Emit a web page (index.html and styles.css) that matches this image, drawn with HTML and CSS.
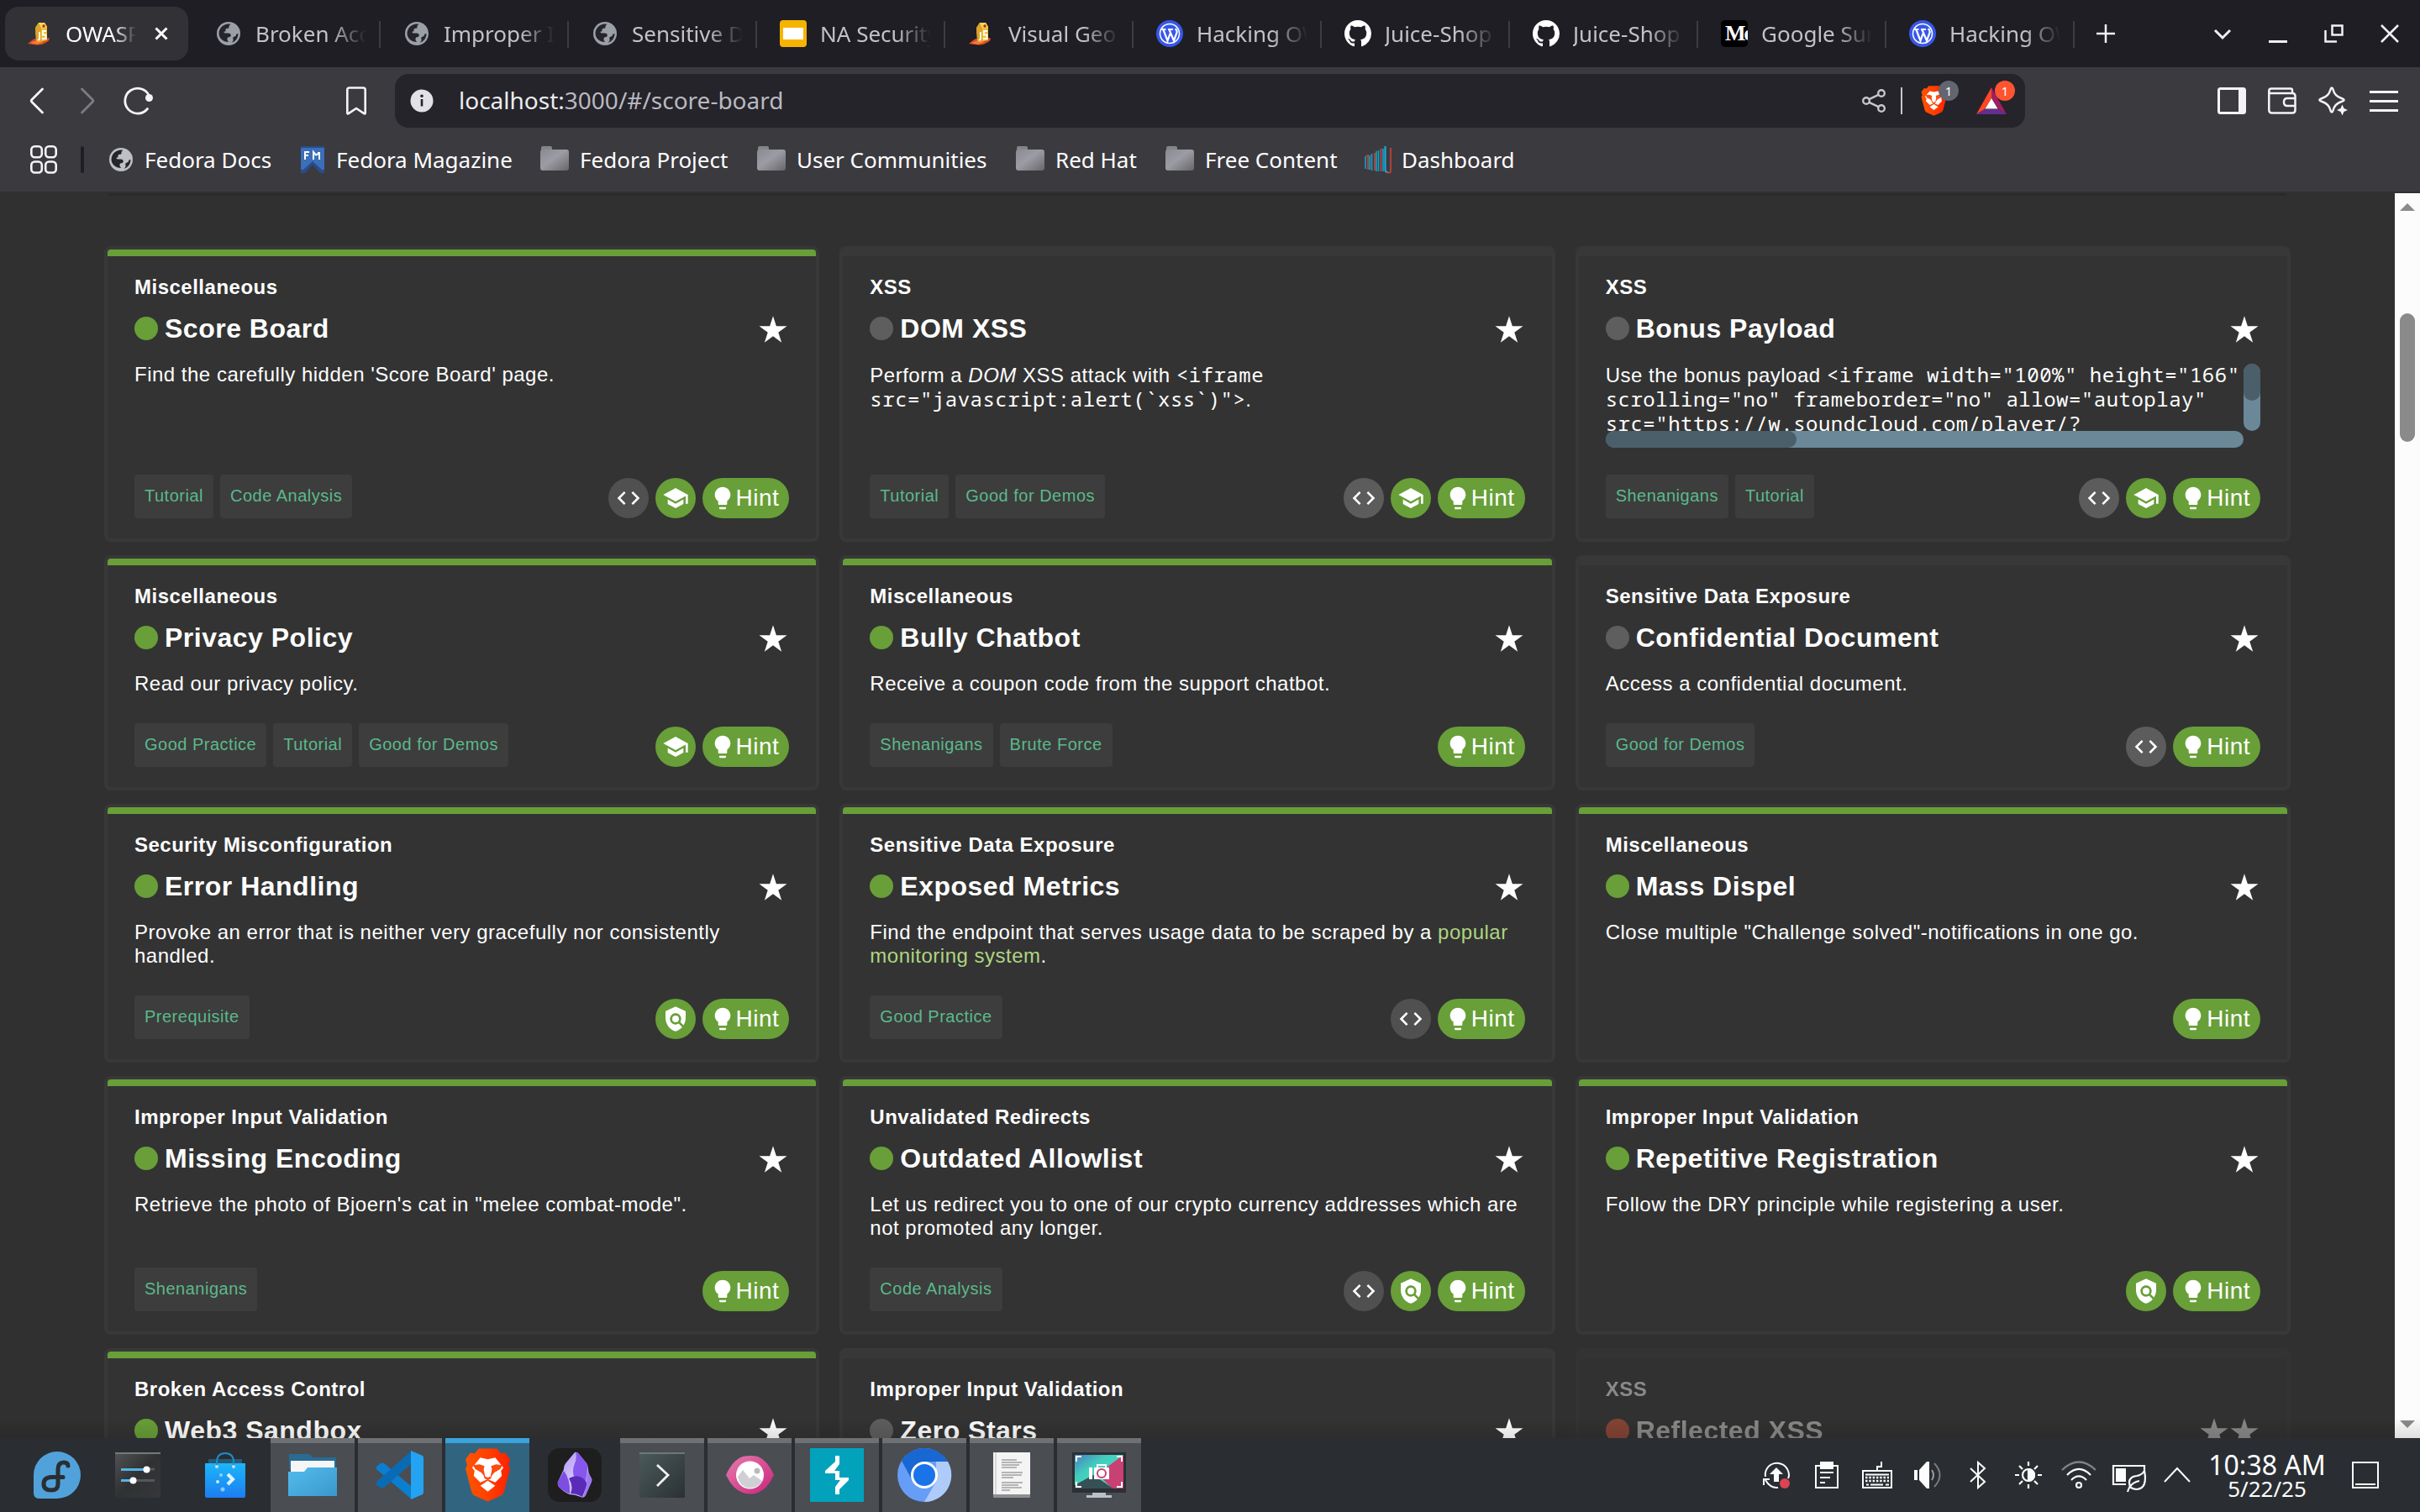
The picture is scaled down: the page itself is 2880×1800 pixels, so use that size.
FILE: index.html
```html
<!DOCTYPE html>
<html lang="en">
<head>
<meta charset="utf-8">
<title>OWASP Juice Shop</title>
<link rel="stylesheet" href="styles.css">
</head>
<body>
<svg class="defs" width="0" height="0">
<defs>
<linearGradient id="g-folder" x1="0" y1="0" x2="1" y2="1"><stop offset="0" stop-color="#8a8a92"/><stop offset=".45" stop-color="#9c9ca4"/><stop offset="1" stop-color="#67676a"/></linearGradient>
<linearGradient id="g-dark" x1="0" y1="0" x2="1" y2="1"><stop offset="0" stop-color="#525355"/><stop offset=".5" stop-color="#303133"/><stop offset="1" stop-color="#36373a"/></linearGradient>
<linearGradient id="g-term" x1="0" y1="0" x2="1" y2="1"><stop offset="0" stop-color="#4b5a5b"/><stop offset="1" stop-color="#2b3133"/></linearGradient>
<linearGradient id="g-bag" x1="0" y1="0" x2="0" y2="1"><stop offset="0" stop-color="#1cb6f9"/><stop offset="1" stop-color="#1c7df2"/></linearGradient>
<linearGradient id="g-dir" x1="0" y1="0" x2="1" y2="1"><stop offset="0" stop-color="#54bcef"/><stop offset="1" stop-color="#3a98cb"/></linearGradient>
<linearGradient id="g-pink" x1="0" y1="0" x2="1" y2="1"><stop offset="0" stop-color="#e77bb0"/><stop offset="1" stop-color="#c9247a"/></linearGradient>
<linearGradient id="g-brave" x1="0" y1="0" x2="1" y2="0"><stop offset="0" stop-color="#ff5500"/><stop offset=".5" stop-color="#ff4000"/><stop offset="1" stop-color="#ff2000"/></linearGradient>
<linearGradient id="g-scr" x1="0" y1="0" x2="1" y2="1"><stop offset="0" stop-color="#4a7fc0"/><stop offset=".35" stop-color="#42cdbd"/><stop offset="1" stop-color="#4ce6c8"/></linearGradient>
<linearGradient id="g-obs" x1="0" y1="0" x2="1" y2="1"><stop offset="0" stop-color="#a88bf5"/><stop offset=".5" stop-color="#d3c4fb"/><stop offset="1" stop-color="#b79df6"/></linearGradient>
</defs>
<symbol id="globe" viewBox="0 0 24 24"><circle cx="12" cy="12" r="10.5" fill="currentColor"/><path class="hole" d="M3.4 12c0-4.8 3.9-8.6 8.6-8.6.8 0 1.2.1 1.9.3-1.1.5-1.6 1.3-1.5 2.3.1.9-.4 1.4-1.5 1.4-1.200 0-1.600.6-1.500 1.700.1.800-.5 1.100-1.200 1.100-.5.100-.5 1 .2 1.300 2.100.4 5.200-.4 5.600 1.600.3 1.500-.5 2-1.800 2.100-1.200.1-1.500 1-1.300 2.300.1.800.700 1.500 1.300 2-5.200 0-8.800-3.400-8.800-7.500zM16 16.500c-.5-1 .3-1.600 1.400-1.900 1.300-.4 1.700-1.300 1.400-2.300 1 .2 1.400.1 1.800-.500.2 4-2.600 7.500-6 8.400 1.400-1 2-2.400 1.400-3.700z"/></symbol>
<symbol id="juice" viewBox="0 0 32 32"><path d="M1 28c3-2 5-5 9-6l16-1c2 1 0 4-2 5s-4 2-6 3c-5 1-11 0-17-1z" fill="#dc4b20"/><path d="M4 27l8-3 8 2-8 3z" fill="#f47a3a"/><path d="M10 9l4-6h7l3 5v16l-11 2-2-2z" fill="#f2c038"/><path d="M10 9l4-6 3 6v16l-6-1z" fill="#dca42c"/><path d="M14 3h7l3 5-7 1z" fill="#f8d95c"/><circle cx="20" cy="7" r="1.700" fill="#b4291e"/><path d="M15 14v8q0 2-2 1M23 13h-4v4.500h3.500V22H18" fill="none" stroke="#fff" stroke-width="1.800"/></symbol>
<symbol id="slides" viewBox="0 0 32 32"><rect width="32" height="32" rx="4" fill="#f6b400"/><rect x="4" y="9" width="24" height="14" fill="#fff"/></symbol>
<symbol id="wp" viewBox="0 0 32 32"><circle cx="16" cy="16" r="16" fill="#3858e9"/><circle cx="16" cy="16" r="11.500" fill="none" stroke="#fff" stroke-width="1.500"/><path d="M6.500 11h5M14 11h6M8.500 11.500l5 13 3-8.500M15.500 11.500l5.500 13 3.500-9.500c.8-2.500-1-3.500-1.500-5" fill="none" stroke="#fff" stroke-width="2.200"/></symbol>
<symbol id="github" viewBox="0 0 16 16"><path fill="#fff" d="M8 0C3.580 0 0 3.580 0 8c0 3.540 2.290 6.530 5.470 7.590.4.070.55-.17.55-.38 0-.19-.01-.82-.01-1.490-2.010.37-2.530-.49-2.690-.94-.09-.23-.48-.94-.82-1.130-.28-.15-.68-.52-.01-.53.63-.01 1.080.58 1.230.82.72 1.210 1.870.87 2.330.66.07-.52.28-.87.51-1.070-1.780-.2-3.640-.89-3.640-3.950 0-.87.31-1.590.82-2.150-.08-.2-.36-1.020.08-2.120 0 0 .67-.21 2.200.82.64-.18 1.320-.27 2-.27s1.360.09 2 .27c1.530-1.040 2.200-.82 2.200-.82.44 1.100.16 1.920.08 2.120.51.56.82 1.270.82 2.150 0 3.070-1.870 3.750-3.650 3.950.29.25.54.73.54 1.480 0 1.070-.01 1.930-.01 2.200 0 .21.15.46.55.38A8.010 8.010 0 0 0 16 8c0-4.420-3.580-8-8-8z"/></symbol>
<symbol id="folder" viewBox="0 0 34 32"><path d="M1 5V2q0-2 2-2h9q2 0 2 2v3z" fill="#858588"/><rect x="0" y="4" width="34" height="25" rx="3" fill="url(#g-folder)"/></symbol>
<symbol id="star" viewBox="0 0 24 24"><path fill="currentColor" d="M12 2l2.330 7.190h7.560l-6.110 4.440 2.330 7.180L12 16.370l-6.110 4.440 2.330-7.180-6.110-4.440h7.560z"/></symbol>
<symbol id="code" viewBox="0 0 24 24"><path fill="#fff" d="M9.400 16.600L4.800 12l4.600-4.600L8 6l-6 6 6 6 1.400-1.400zm5.200 0l4.600-4.600-4.600-4.600L16 6l6 6-6 6-1.400-1.400z"/></symbol>
<symbol id="school" viewBox="0 0 24 24"><path fill="#fff" d="M5 13.180v4L12 21l7-3.820v-4L12 17l-7-3.820zM12 3L1 9l11 6 9-4.910V17h2V9L12 3z"/></symbol>
<symbol id="policy" viewBox="0 0 24 24"><path fill="#fff" d="M21 5l-9-4-9 4v6c0 5.550 3.840 10.740 9 12 2.300-.56 4.330-1.900 5.880-3.710l-3.120-3.120c-1.940 1.290-4.580 1.070-6.290-.64-1.950-1.950-1.950-5.120 0-7.070 1.950-1.950 5.120-1.950 7.070 0 1.710 1.710 1.920 4.350.64 6.290l2.900 2.900C20.290 15.690 21 13.380 21 11V5z"/><circle cx="12" cy="12" r="3" fill="#fff"/></symbol>
<symbol id="bulb" viewBox="0 0 24 24"><path fill="#fff" d="M9 21c0 .5.4 1 1 1h4c.6 0 1-.5 1-1v-1H9v1zm3-19C8.100 2 5 5.100 5 9c0 2.400 1.200 4.500 3 5.700V17c0 .5.400 1 1 1h6c.600 0 1-.5 1-1v-2.300c1.800-1.300 3-3.400 3-5.700 0-3.900-3.100-7-7-7z"/></symbol>
<symbol id="lion" viewBox="0 0 56 64"><path d="M17 0h22l5 6 5-1 6 8-2 7 2 4-7 27q-1 4-4 6L28 64 12 57q-3-2-4-6L1 24l2-4-2-7 6-8 5 1z" fill="url(#g-brave)"/><path d="M19 11l9 2 9-2 10 12-3 4 1 6-8 8-9-4-9 4-8-8 1-6-3-4z" fill="#fff"/><path d="M10 20l8-1 6 2-1 4 2 10-5-6-7-4zM46 20l-8-1-6 2 1 4-2 10 5-6 7-4zM23 33l5 2 5-2-1 3-4 2-4-2z" fill="#ff4a10"/><path d="M19 45l9-6 9 6-9 7z" fill="#fff"/></symbol>
</svg>

<header class="tabs">
  <div class="tab tab-active"><svg class="fav"><use href="#juice"/></svg><span class="tab-text">OWASP Juice</span><svg class="tab-x" viewBox="0 0 16 16"><path d="M1.500 1.500l13 13M14.500 1.500l-13 13" stroke="#fff" stroke-width="3"/></svg></div>
  <div class="tab"><svg class="fav globe"><use href="#globe"/></svg><span class="tab-text">Broken Access</span></div>
  <div class="tab"><svg class="fav globe"><use href="#globe"/></svg><span class="tab-text">Improper Input</span></div>
  <div class="tab"><svg class="fav globe"><use href="#globe"/></svg><span class="tab-text">Sensitive Data</span></div>
  <div class="tab"><svg class="fav"><use href="#slides"/></svg><span class="tab-text">NA Security</span></div>
  <div class="tab"><svg class="fav"><use href="#juice"/></svg><span class="tab-text">Visual Geo S</span></div>
  <div class="tab"><svg class="fav"><use href="#wp"/></svg><span class="tab-text">Hacking OW</span></div>
  <div class="tab"><svg class="fav"><use href="#github"/></svg><span class="tab-text">Juice-Shop</span></div>
  <div class="tab"><svg class="fav"><use href="#github"/></svg><span class="tab-text">Juice-Shop</span></div>
  <div class="tab"><span class="fav medium">Me</span><span class="tab-text">Google Sum</span></div>
  <div class="tab"><svg class="fav"><use href="#wp"/></svg><span class="tab-text">Hacking OW</span></div>
  <svg class="plus" viewBox="0 0 22 22"><path d="M11 0v22M0 11h22" stroke="#f0f0f2" stroke-width="2.500"/></svg>
  <div class="win">
    <svg width="22" height="32" viewBox="0 0 22 32"><path d="M2 12l9 9 9-9" fill="none" stroke="#f0f0f2" stroke-width="3"/></svg>
    <svg width="22" height="32" viewBox="0 0 22 32"><path d="M0 25.500h22" stroke="#f0f0f2" stroke-width="3"/></svg>
    <svg width="23" height="32" viewBox="0 0 23 32"><path d="M9.500 6.500h12v11h-12zM1.500 12v13.500H15" fill="none" stroke="#f0f0f2" stroke-width="2.500"/></svg>
    <svg width="22" height="32" viewBox="0 0 22 32"><path d="M1 6l20 20M21 6L1 26" stroke="#f0f0f2" stroke-width="2.500"/></svg>
  </div>
</header>

<div class="toolbar">
  <div class="nav">
    <svg width="16" height="32" viewBox="0 0 16 32"><path d="M14.500 2L2 14.500q-1.500 1.500 0 3L14.500 30" fill="none" stroke="#f4f4f6" stroke-width="2.800" stroke-linecap="round"/></svg>
    <svg width="16" height="32" viewBox="0 0 16 32"><path d="M1.500 2L14 14.500q1.500 1.500 0 3L1.500 30" fill="none" stroke="#7d7c83" stroke-width="2.800" stroke-linecap="round"/></svg>
    <svg width="34" height="34" viewBox="0 0 34 34"><path d="M27.500 26.500A15 15 0 1 1 29.500 11" fill="none" stroke="#f4f4f6" stroke-width="2.800" stroke-linecap="round"/><circle cx="29.500" cy="13.500" r="4.500" fill="#f4f4f6"/></svg>
  </div>
  <svg class="mark" width="24" height="34" viewBox="0 0 24 34"><path d="M1.300 4q0-2.500 2.500-2.500h16.400q2.500 0 2.500 2.500v27.500q0 1.500-1.500.7L12 26l-9.200 6.200q-1.500.8-1.500-.7z" fill="none" stroke="#f4f4f6" stroke-width="2.600"/></svg>
  <div class="url">
    <svg class="info" viewBox="0 0 28 28"><circle cx="14" cy="14" r="13.500" fill="#e2e1e7"/><circle cx="14" cy="8.300" r="1.800" fill="#25242a"/><path d="M14 12v8.500" stroke="#25242a" stroke-width="2.600"/></svg>
    <span class="addr"><b>localhost:</b>3000/#/score-board</span>
    <svg class="share" width="28" height="28" viewBox="0 0 28 28" fill="none" stroke="#c6c6cc" stroke-width="2.400"><circle cx="5" cy="14" r="3.800"/><circle cx="23" cy="5" r="3.800"/><circle cx="23" cy="23" r="3.800"/><path d="M8.500 12.200L19.500 6.800M8.500 15.800l11 5.400"/></svg>
    <i class="url-sep"></i>
    <div class="ext"><svg width="31" height="36"><use href="#lion"/></svg><span class="badge">1</span></div>
    <div class="ext"><svg width="36" height="32" viewBox="0 0 36 32"><path d="M18 0L0 32l10-6 8-13z" fill="#ff4724"/><path d="M18 0l18 32-10-6-8-13z" fill="#9e1f63"/><path d="M0 32h36l-10-6H10z" fill="#662d91"/><path d="M18 13l7.500 12.500h-15z" fill="#fff"/></svg><span class="badge badge-hot">1</span></div>
  </div>
  <div class="tools">
    <svg width="34" height="32" viewBox="0 0 34 32"><rect x="1.500" y="1.500" width="31" height="29" rx="2" fill="none" stroke="#f4f4f6" stroke-width="3"/><path d="M25 1h8v30h-8z" fill="#f4f4f6"/></svg>
    <svg width="34" height="32" viewBox="0 0 34 32" fill="none" stroke="#f4f4f6" stroke-width="2.500"><path d="M29 6V3.500q0-2-2-2H4q-2.700 0-2.700 2.800T4 7h25q3.500 0 3.500 3.500V27q0 3.500-3.500 3.500H5Q1.300 30.500 1.300 27V4M32.500 13H23q-4 0-4 4.500t4 4.500h9.500"/></svg>
    <svg width="36" height="36" viewBox="0 0 36 36"><path d="M17 2.500q1 0 1.500 2 2 8 10 10.500 3 1 3 2t-3 2q-8 2.500-10 10.500-.5 2-1.500 2t-1.500-2Q13.500 21.500 5.500 19q-3-1-3-2t3-2q8-2.500 10-10.500.5-2 1.500-2z" fill="none" stroke="#f4f4f6" stroke-width="2.500"/><path d="M29.500 22.500l2 4.500 4.500 2-4.500 2-2 4.500-2-4.500-4.500-2 4.500-2z" fill="#f4f4f6"/></svg>
    <svg width="34" height="32" viewBox="0 0 34 32"><path d="M0 5.500h34M0 16.500h34M0 27.500h34" stroke="#f4f4f6" stroke-width="2.800"/></svg>
  </div>
</div>

<nav class="bookmarks">
  <svg class="apps" viewBox="0 0 32 34" fill="none" stroke="#f4f4f6" stroke-width="2.600"><rect x="1.300" y="1.300" width="12.500" height="13" rx="4"/><rect x="18.200" y="1.300" width="12.500" height="13" rx="4"/><rect x="1.300" y="19.500" width="12.500" height="13" rx="4"/><rect x="18.200" y="19.500" width="12.500" height="13" rx="4"/></svg>
  <i class="bm-sep"></i>
  <div class="bm w1"><svg class="globe2"><use href="#globe"/></svg>Fedora Docs</div>
  <div class="bm w2"><svg viewBox="0 0 32 32"><path d="M2 0h28v32h-5l-9-10-9 10H2z" fill="#2a4b8c"/><path d="M2 2h28v26h-3l-11-10L5 28H2z" fill="#3b6fb8"/><path d="M7 16V7h5M7 11h4M17 16V7l3 3.500L23 9V7M24 7v9" fill="none" stroke="#fff" stroke-width="2"/></svg>Fedora Magazine</div>
  <div class="bm w3"><svg><use href="#folder"/></svg>Fedora Project</div>
  <div class="bm w4"><svg><use href="#folder"/></svg>User Communities</div>
  <div class="bm w5"><svg><use href="#folder"/></svg>Red Hat</div>
  <div class="bm w6"><svg><use href="#folder"/></svg>Free Content</div>
  <div class="bm"><svg viewBox="0 0 32 32" fill="none" stroke-width="1.600"><path d="M1 27V12M6 28V11M8.500 29V9M14 30V6M16.500 30V5M22 30V3" stroke="#10a4c8"/><path d="M2 12l2-1v17M11 9l1 0v20M18.500 5l1-1v26M31 2v29" stroke="#c8443c"/><path d="M24.500 0v28q0 3 3 3" stroke="#19a9dc" stroke-width="2.200"/><path d="M26 31.500h5" stroke="#d2453c"/></svg>Dashboard</div>
</nav>

<div class="viewport">
<main class="board">
  <div class="panel-edge"></div>
  <div class="grid">

  <article class="card solved"><h3>Miscellaneous</h3><div class="title"><i class="dot"></i><h2>Score Board</h2><span class="stars"><svg><use href="#star"/></svg></span></div><p class="tall">Find the carefully hidden 'Score Board' page.</p>
    <footer><span class="tag">Tutorial</span><span class="tag">Code Analysis</span><span class="acts"><span class="btn gray"><svg class="sm"><use href="#code"/></svg></span><span class="btn"><svg><use href="#school"/></svg></span><span class="hint"><svg><use href="#bulb"/></svg>Hint</span></span></footer></article>

  <article class="card"><h3>XSS</h3><div class="title"><i class="dot"></i><h2>DOM XSS</h2><span class="stars"><svg><use href="#star"/></svg></span></div><p class="tall">Perform a <em>DOM</em> XSS attack with <code>&lt;iframe src="javascript:alert(`xss`)"&gt;</code>.</p>
    <footer><span class="tag">Tutorial</span><span class="tag">Good for Demos</span><span class="acts"><span class="btn gray"><svg class="sm"><use href="#code"/></svg></span><span class="btn"><svg><use href="#school"/></svg></span><span class="hint"><svg><use href="#bulb"/></svg>Hint</span></span></footer></article>

  <article class="card"><h3>XSS</h3><div class="title"><i class="dot"></i><h2>Bonus Payload</h2><span class="stars"><svg><use href="#star"/></svg></span></div>
    <div class="scroller"><p>Use the bonus payload <code>&lt;iframe width="100%" height="166"<br>scrolling="no" frameborder="no" allow="autoplay"<br>src="https://w.soundcloud.com/player/?</code></p><i class="vbar"><b></b></i><i class="hbar"><b></b></i></div>
    <footer><span class="tag">Shenanigans</span><span class="tag">Tutorial</span><span class="acts"><span class="btn gray"><svg class="sm"><use href="#code"/></svg></span><span class="btn"><svg><use href="#school"/></svg></span><span class="hint"><svg><use href="#bulb"/></svg>Hint</span></span></footer></article>

  <article class="card solved"><h3>Miscellaneous</h3><div class="title"><i class="dot"></i><h2>Privacy Policy</h2><span class="stars"><svg><use href="#star"/></svg></span></div><p>Read our privacy policy.</p>
    <footer><span class="tag">Good Practice</span><span class="tag">Tutorial</span><span class="tag">Good for Demos</span><span class="acts"><span class="btn"><svg><use href="#school"/></svg></span><span class="hint"><svg><use href="#bulb"/></svg>Hint</span></span></footer></article>

  <article class="card solved"><h3>Miscellaneous</h3><div class="title"><i class="dot"></i><h2>Bully Chatbot</h2><span class="stars"><svg><use href="#star"/></svg></span></div><p>Receive a coupon code from the support chatbot.</p>
    <footer><span class="tag">Shenanigans</span><span class="tag">Brute Force</span><span class="acts"><span class="hint"><svg><use href="#bulb"/></svg>Hint</span></span></footer></article>

  <article class="card"><h3>Sensitive Data Exposure</h3><div class="title"><i class="dot"></i><h2>Confidential Document</h2><span class="stars"><svg><use href="#star"/></svg></span></div><p>Access a confidential document.</p>
    <footer><span class="tag">Good for Demos</span><span class="acts"><span class="btn gray"><svg class="sm"><use href="#code"/></svg></span><span class="hint"><svg><use href="#bulb"/></svg>Hint</span></span></footer></article>

  <article class="card solved"><h3>Security Misconfiguration</h3><div class="title"><i class="dot"></i><h2>Error Handling</h2><span class="stars"><svg><use href="#star"/></svg></span></div><p>Provoke an error that is neither very gracefully nor consistently handled.</p>
    <footer><span class="tag">Prerequisite</span><span class="acts"><span class="btn"><svg class="pol"><use href="#policy"/></svg></span><span class="hint"><svg><use href="#bulb"/></svg>Hint</span></span></footer></article>

  <article class="card solved"><h3>Sensitive Data Exposure</h3><div class="title"><i class="dot"></i><h2>Exposed Metrics</h2><span class="stars"><svg><use href="#star"/></svg></span></div><p>Find the endpoint that serves usage data to be scraped by a <a>popular monitoring system</a>.</p>
    <footer><span class="tag">Good Practice</span><span class="acts"><span class="btn gray"><svg class="sm"><use href="#code"/></svg></span><span class="hint"><svg><use href="#bulb"/></svg>Hint</span></span></footer></article>

  <article class="card solved"><h3>Miscellaneous</h3><div class="title"><i class="dot"></i><h2>Mass Dispel</h2><span class="stars"><svg><use href="#star"/></svg></span></div><p>Close multiple "Challenge solved"-notifications in one go.</p>
    <footer><span class="acts"><span class="hint"><svg><use href="#bulb"/></svg>Hint</span></span></footer></article>

  <article class="card solved"><h3>Improper Input Validation</h3><div class="title"><i class="dot"></i><h2>Missing Encoding</h2><span class="stars"><svg><use href="#star"/></svg></span></div><p>Retrieve the photo of Bjoern's cat in "melee combat-mode".</p>
    <footer><span class="tag">Shenanigans</span><span class="acts"><span class="hint"><svg><use href="#bulb"/></svg>Hint</span></span></footer></article>

  <article class="card solved"><h3>Unvalidated Redirects</h3><div class="title"><i class="dot"></i><h2>Outdated Allowlist</h2><span class="stars"><svg><use href="#star"/></svg></span></div><p>Let us redirect you to one of our crypto currency addresses which are not promoted any longer.</p>
    <footer><span class="tag">Code Analysis</span><span class="acts"><span class="btn gray"><svg class="sm"><use href="#code"/></svg></span><span class="btn"><svg class="pol"><use href="#policy"/></svg></span><span class="hint"><svg><use href="#bulb"/></svg>Hint</span></span></footer></article>

  <article class="card solved"><h3>Improper Input Validation</h3><div class="title"><i class="dot"></i><h2>Repetitive Registration</h2><span class="stars"><svg><use href="#star"/></svg></span></div><p>Follow the DRY principle while registering a user.</p>
    <footer><span class="acts"><span class="btn"><svg class="pol"><use href="#policy"/></svg></span><span class="hint"><svg><use href="#bulb"/></svg>Hint</span></span></footer></article>

  <article class="card solved"><h3>Broken Access Control</h3><div class="title"><i class="dot"></i><h2>Web3 Sandbox</h2><span class="stars"><svg><use href="#star"/></svg></span></div></article>
  <article class="card"><h3>Improper Input Validation</h3><div class="title"><i class="dot"></i><h2>Zero Stars</h2><span class="stars"><svg><use href="#star"/></svg></span></div></article>
  <article class="card disabled"><h3>XSS</h3><div class="title"><i class="dot"></i><h2>Reflected XSS</h2><span class="stars"><svg><use href="#star"/></svg><svg><use href="#star"/></svg></span></div></article>
  </div>
</main>
<aside class="scrollbar"><svg viewBox="0 0 18 9"><path d="M0 9L9 0l9 9z" fill="#8b8b8b"/></svg><i></i><svg class="down" viewBox="0 0 18 9"><path d="M0 0l9 9 9-9z" fill="#8b8b8b"/></svg></aside>
</div>

<footer class="taskbar">
  <div class="launch">
    <svg class="l1" width="56" height="56" viewBox="0 0 56 56"><path d="M28 0a28 28 0 1 1 0 56H7q-7 0-7-7V28A28 28 0 0 1 28 0z" fill="#51a2da"/><path d="M41 17q0-4-5-4-7 0-7 8v18q0 7-8 7-9 0-9-7.500T21 30.500h14" fill="none" stroke="#2a2e33" stroke-width="5" stroke-linecap="round"/></svg>
    <svg class="l2" width="54" height="54" viewBox="0 0 54 54"><rect width="54" height="54" rx="1" fill="url(#g-dark)"/><path d="M0 1h54" stroke="#77787a" stroke-width="2"/><path d="M38 20h9M21 33.500h26" stroke="#55565a" stroke-width="3"/><path d="M7 20.500h30M7 33.500h14" stroke="#54b4e4" stroke-width="3"/><circle cx="37.500" cy="20.500" r="4" fill="#fff"/><circle cx="21.500" cy="33.500" r="4" fill="#fff"/></svg>
    <svg class="l3" width="48" height="54" viewBox="0 0 48 54"><path d="M4 13V8h40v5z" fill="#245c78"/><path d="M0 13h48v39q0 2-2 2H2q-2 0-2-2z" fill="url(#g-bag)"/><path d="M14 17V12Q14 1 24 1t10 11v5" fill="none" stroke="#1d8ccb" stroke-width="2"/><circle cx="14" cy="17" r="2" fill="#cde"/><circle cx="34" cy="17" r="2" fill="#cde"/><path d="M27 26l6 6-6 6" fill="none" stroke="#dff2ff" stroke-width="4"/><circle cx="19" cy="27" r="2" fill="#8fd3ff"/><circle cx="15" cy="35" r="2" fill="#cbeaff"/><circle cx="21" cy="44" r="2.500" fill="#8fc6ff"/></svg>
  </div>
  <div class="task"><svg width="58" height="54" viewBox="0 0 58 54"><path d="M1 2h24l4 4h28v14H1z" fill="#286c94"/><path d="M3 10h52v20H3z" fill="#f6f6f6"/><path d="M0 23h19l4-5h35v34H0z" fill="url(#g-dir)"/></svg></div>
  <div class="task"><svg width="58" height="58" viewBox="0 0 58 58"><path d="M1 19l5-4q2-1 4 0l33 28v15L2 23q-2-2-1-4z" fill="#0a7fd0"/><path d="M1 41l5 3q2 1 4 0l33-29V0L2 36q-2 3-1 5z" fill="#0a6bb5"/><path d="M42 0l14 6q1 1 1 3v40q0 2-1 3l-14 6z" fill="#24a3f2"/></svg></div>
  <div class="task active"><svg width="55" height="64"><use href="#lion"/></svg></div>
  <div class="obs"><svg width="42" height="54" viewBox="0 0 42 54"><path d="M21 0q3-1 5 2l9 11q2 3 2 7 0 5 4 11 1 3-1 6l-6 14q-2 4-6 2-7-3-13-3-6-2-12-8-3-3-2-7L8 20q0-5 3-8z" fill="url(#g-obs)"/><path d="M22 0q2 0 4 2l9 11q2 3 1 8-1 6-2 13-6-6-13-3-4-8 0-18 3-7 1-13z" fill="#8656ee"/><path d="M14 31q10-6 18 1 4 3 3 8l-5 13q-7-4-14-4 4-9-2-18z" fill="#5a2bb8"/><path d="M8 22q8 10 7 27-5-1-12-7-3-3-2-7z" fill="#7d4fe0"/><path d="M36 22q1 4 5 9 1 3-1 6l-6 14q-1 2-3 2 5-14 4-21z" fill="#9d78f3"/></svg></div>
  <div class="task"><svg width="54" height="54" viewBox="0 0 54 54"><rect width="54" height="54" rx="1" fill="url(#g-term)"/><path d="M0 1h54" stroke="#6b7879" stroke-width="2"/><path d="M21 15l13 12-13 13" fill="none" stroke="#f2f2f2" stroke-width="2.800"/></svg></div>
  <div class="task"><svg width="57" height="46" viewBox="0 0 57 46"><path d="M0 23Q8 5 20 1q9-2 18 0 12 5 19 22-8 17-19 21-9 3-18 0Q8 40 0 23z" fill="url(#g-pink)"/><circle cx="28.500" cy="23" r="16.500" fill="#fff"/><path d="M14 25l6-8 8 10 5-4 10 7q-4 8-14.500 8.500Q17 38 14 25z" fill="#cfcfd4"/><circle cx="37" cy="18" r="3.500" fill="#bbb"/></svg></div>
  <div class="task"><svg width="64" height="64" viewBox="0 0 64 64"><rect width="64" height="64" fill="#03a2bc"/><path d="M30 9h5v10l-6 8h6v8h11v3L35 49v6h-5V46l6-8h-6v-8H18v-3l12-11z" fill="#fff"/></svg></div>
  <div class="task"><svg width="64" height="64" viewBox="0 0 64 64"><circle cx="32" cy="32" r="32" fill="#669df6"/><path d="M32 0a32 32 0 0 1 28 16H32L18 39 5 15A32 32 0 0 1 32 0z" fill="#1967d2"/><path d="M60 16a32 32 0 0 1-28 48l14-24V16z" fill="#aecbfa"/><circle cx="32" cy="32" r="16" fill="#fff"/><circle cx="32" cy="32" r="13" fill="#1a73e8"/></svg></div>
  <div class="task"><svg width="44" height="54" viewBox="0 0 44 54"><rect width="44" height="54" rx="1" fill="#8f8f8f"/><rect width="44" height="50" fill="#f4f4f4"/><path d="M3 0v50" stroke="#cfcfcf" stroke-width="1.500"/><path d="M10 9h18M10 12h24M10 15h21M10 18h18M10 24h25M10 27h24M10 30h14M10 36h25M10 39h20M10 42h24M10 45h10" stroke="#b5b5b5" stroke-width="1.800"/></svg></div>
  <div class="task"><svg width="64" height="54" viewBox="0 0 64 54"><rect width="64" height="48" fill="#2c3034"/><rect x="3" y="3" width="58" height="40" fill="url(#g-scr)"/><path d="M61 3v40H48L30 26z" fill="#c94072"/><path d="M3 43V39l22-12 24 16z" fill="#375055"/><path d="M5 11V5h6M53 5h6v6M5 35v6h6M53 41h6v-6" fill="none" stroke="#fff" stroke-width="2"/><path d="M20 18h4v14h-4zM26 18h18v14H26z" fill="#fff"/><path d="M30 18v-3h10v3" fill="none" stroke="#fff" stroke-width="2"/><circle cx="35" cy="25" r="5" fill="#fff" stroke="#c94072" stroke-width="2"/><path d="M24 48h16v3h7v3H17v-3h7z" fill="#b9c2c6"/></svg></div>

  <div class="tray">
    <svg viewBox="0 0 32 32" fill="none" stroke="#fcfcfc" stroke-width="2"><path d="M3 18A14 14 0 0 1 30 11q2 5 0 9M18 31q-9 1-15-9M1 28v-7h7"/><path d="M16 7l8 8h-5v9h-6v-9H8z" fill="#fcfcfc" stroke="none"/><circle cx="26" cy="26" r="6" fill="#da4453" stroke="none"/></svg>
    <svg viewBox="0 0 32 32" fill="none" stroke="#fcfcfc" stroke-width="2"><path d="M3 5h26v26H3z"/><path d="M8 0h16v9H8z" fill="#fcfcfc" stroke="none"/><path d="M8 13h16M8 19h12M8 25h6"/></svg>
    <svg viewBox="0 0 32 32" fill="none" stroke="#fcfcfc" stroke-width="2"><path d="M-1 11h34v20H-1zM16 10V6h5V0M2 15.500h28"/><path d="M2 19h28M2 23h28" stroke-width="2.500" stroke-dasharray="2.500 1.800"/><path d="M3 27.500h3M8 27.500h15M26 27.500h4"/></svg>
    <svg viewBox="0 0 32 32" fill="none" stroke-width="2"><path d="M0 10h4v12H0zM6 10L15 0h3v32h-3L6 22z" fill="#fcfcfc"/><path d="M21 10q4 6 0 12" stroke="#9a9c9f"/><path d="M24 2q13 14 0 28" stroke="#777a7e"/></svg>
    <svg viewBox="0 0 32 32" fill="none" stroke="#fcfcfc" stroke-width="2"><path d="M7 8l17 16-8 7V1l8 7L7 24"/></svg>
    <svg viewBox="0 0 32 32" fill="none" stroke="#fcfcfc" stroke-width="2.200"><circle cx="16" cy="16" r="7"/><path d="M16 9a7 7 0 0 1 0 14z" fill="#fcfcfc"/><path d="M16 0v5M16 27v5M0 16h5M27 16h5M5 5l4 4M23 23l4 4M27 5l-4 4M9 23l-4 4"/></svg>
    <svg class="wide" viewBox="0 0 42 32" fill="none" stroke="#fcfcfc" stroke-width="2.200"><path d="M1 10q20-19 40 0" stroke="#808386"/><path d="M7 16q14-14 28 0M12 22q9-9 18 0"/><circle cx="21" cy="28" r="3"/></svg>
    <svg class="wide" viewBox="0 0 42 32" fill="none" stroke="#fcfcfc" stroke-width="2.200"><path d="M17 27H2V5h37v5"/><path d="M5 8h12v16H5z" fill="#fcfcfc" stroke="none"/><path d="M39 11q4 21-9 22-9 0-9-8 0-7 9-8 6-1 9-6zM19 36q3-11 14-13"/></svg>
    <svg class="up" viewBox="0 0 32 32" fill="none" stroke="#fcfcfc" stroke-width="2"><path d="M1 24L16 8l15 16"/></svg>
  </div>
  <div class="clock"><div>10:38 AM</div><small>5/22/25</small></div>
  <svg class="desk" width="32" height="32" viewBox="0 0 32 32" fill="none" stroke="#fcfcfc" stroke-width="2"><path d="M1 1h30v30H1zM4 27h24"/></svg>
</footer>
</body>
</html>
```
FILE: styles.css
```css
* { box-sizing: border-box; }
body { margin: 0; width: 2880px; height: 1800px; overflow: hidden; display: flex; flex-direction: column; background: #303030; font-family: "Noto Sans", sans-serif; color: #fff; }
svg { display: block; flex: none; overflow: visible; }
svg.defs { position: absolute; }
h2, h3, p { margin: 0; }
i { font-style: normal; }

/* tab strip */
.tabs { height: 80px; flex: none; background: #1f1e25; display: flex; align-items: center; padding-left: 6px; }
.tab { width: 224px; height: 64px; display: flex; align-items: center; padding-left: 26px; position: relative; flex: none; }
.tab + .tab::after { content: ""; position: absolute; right: 1px; top: 17px; width: 2px; height: 32px; background: #3d3c43; }
.tab-active { width: 218px; margin-right: 6px; background: #323136; border-radius: 16px; }
.fav { width: 32px; height: 32px; flex: none; }
.globe { color: #9aa0a6; }
.hole { fill: #26252b; }
.tab-text { margin-left: 16px; width: 132px; overflow: hidden; white-space: nowrap; font-size: 26px; line-height: 36px; color: #c3c2c7; -webkit-mask-image: linear-gradient(90deg, #000 68%, transparent 100%); mask-image: linear-gradient(90deg, #000 68%, transparent 100%); }
.tab-active .tab-text { width: 84px; color: #fff; margin-left: 14px; }
.tab-x { width: 16px; height: 16px; margin-left: 22px; }
.medium { background: #000; border-radius: 5px; font: bold 26px/32px "Liberation Serif", serif; overflow: hidden; padding-left: 5px; letter-spacing: -2px; }
.plus { width: 22px; height: 22px; margin-left: 25px; }
.win { margin-left: auto; margin-right: 25px; display: flex; gap: 44px; }

/* address row */
.toolbar { height: 80px; flex: none; background: #3b3a3f; display: flex; align-items: center; }
.nav { display: flex; align-items: center; margin-left: 36px; width: 376px; }
.nav svg + svg { margin-left: 44px; }
.nav svg:last-child { margin-left: 36px; }
.url { margin-left: 34px; width: 1940px; height: 64px; background: #25242a; border-radius: 16px; display: flex; align-items: center; padding-left: 18px; }
.info { width: 28px; height: 28px; }
.addr { margin-left: 30px; padding-bottom: 2px; font-size: 28px; color: #bab9c1; flex: 1; }
.addr b { font-weight: 400; color: #ececf0; }
.url-sep { width: 2px; height: 32px; background: #c6c6cc; margin: 0 22px 0 18px; }
.ext { position: relative; margin-right: 35px; display: flex; }
.ext + .ext { margin-right: 22px; }
.badge { position: absolute; right: -14px; top: -6px; width: 24px; height: 24px; border-radius: 50%; background: #63656f; font-size: 15px; line-height: 24px; text-align: center; }
.badge-hot { background: #ff5430; right: -10px; top: -8px; }
.tools { display: flex; align-items: center; gap: 25.500px; margin-left: 229px; }

/* bookmarks */
.bookmarks { height: 70px; flex: none; background: #3b3a3f; border-bottom: 2px solid #302f32; display: flex; align-items: flex-start; padding: 14px 0 0 36px; font-size: 26px; line-height: 32px; white-space: nowrap; }
.apps { width: 32px; height: 34px; margin-top: -1px; }
.bm-sep { width: 4px; height: 32px; border-radius: 2px; background: #1f1e25; margin: 0 28px; }
.bm { display: flex; }
.bm svg { width: 32px; height: 32px; margin-right: 12px; }
.globe2 { color: #bdc1c6; }
.w1 { width: 228px; } .w2 { width: 287px; } .w3 { width: 258px; } .w4 { width: 308px; } .w5 { width: 178px; } .w6 { width: 237px; }
.w3 svg, .w4 svg, .w5 svg, .w6 svg { width: 34px; margin-right: 13px; }

/* page */
.viewport { height: 1482px; flex: none; display: flex; overflow: hidden; position: relative; }
.viewport::after { content: ""; position: absolute; left: 0; right: 0; bottom: 0; height: 24px; background: linear-gradient(transparent, rgba(0, 0, 0, .12)); }
.board { width: 2850px; height: 1482px; overflow: hidden; background: #303030; padding: 0 128px; font-family: "Liberation Sans", sans-serif; letter-spacing: .5px; }
.panel-edge { height: 3px; background: #2a2a2a; border-radius: 0 0 8px 8px; margin: 0 1px 64px; }
.grid { display: grid; grid-template-columns: repeat(3, 1fr); grid-template-rows: 344px 272px 300px 300px 300px; column-gap: 32px; row-gap: 24px; }
.card { background: #333; border-top: 8px solid #383838; border-radius: 4px; box-shadow: 0 0 0 4px #383838; padding: 22px 32px 24px; display: flex; flex-direction: column; }
.solved { border-top-color: #689f38; }
.card h3 { font-size: 24px; line-height: 30px; height: 46px; }
.title { display: flex; height: 40px; align-items: flex-start; }
.dot { width: 28px; height: 28px; border-radius: 50%; background: #5e5e5e; margin: 4px 8px 0 0; }
.solved .dot { background: #689f38; }
.title h2 { font-size: 32px; line-height: 36px; }
.stars { margin: 0 -1px 0 auto; display: flex; }
.stars svg { width: 40px; height: 40px; }
.stars svg + svg { margin-left: -4px; }
.card p { font-size: 24px; line-height: 28px; margin-top: 19px; }
.card code { font-family: "Noto Sans Mono", "DejaVu Sans Mono", monospace; letter-spacing: .5px; font-size: 24px; line-height: 28px; }
.card a { color: #aed581; }
.card footer { margin-top: auto; display: flex; align-items: flex-end; gap: 8px; }
.tag { height: 52px; background: #3d3d3d; color: #5bb98c; border-radius: 4px; font-size: 20px; line-height: 50px; padding: 0 12px; }
.acts { margin-left: auto; display: flex; gap: 8px; }
.btn { width: 48px; height: 48px; border-radius: 50%; background: #689f38; display: flex; align-items: center; justify-content: center; }
.btn svg { width: 32px; height: 32px; }
.btn.gray { background: #5c5c5c; }
.solved .btn.gray { background: #505050; }
.hint { height: 48px; border-radius: 24px; background: #689f38; display: flex; align-items: center; font-size: 28px; padding: 0 12px 0 8px; letter-spacing: .5px; }
.hint svg { width: 32px; height: 32px; }
.scroller { display: grid; grid-template-columns: 1fr 20px; grid-template-rows: 80px 20px; margin-top: 20px; height: 100px; }
.card .scroller p { margin: -1px 0 0; overflow: hidden; white-space: nowrap; }
.vbar, .hbar { background: #6a8898; border-radius: 10px; }
.vbar b, .hbar b { display: block; background: #4a5f69; border-radius: 10px; }
.vbar b { height: 44px; }
.hbar b { height: 20px; width: 227px; }
.disabled { opacity: .43; }
.disabled .dot { background: #f2603c; }

.scrollbar { width: 30px; background: #fcfcfc; display: flex; flex-direction: column; align-items: center; padding: 12px 0 12px; }
.scrollbar svg { width: 18px; height: 9px; }
.scrollbar i { width: 18px; height: 153px; border-radius: 9px; background: #8a8a8a; margin-top: 122px; }
.scrollbar .down { margin-top: auto; }

/* desktop panel */
.taskbar { height: 88px; flex: none; background: #2a2e33; display: flex; align-items: center; }
.launch { width: 322px; display: flex; align-items: center; padding-left: 40px; }
.l2 { margin-left: 41px; }
.l3 { margin-left: 53px; }
.task { width: 100px; height: 88px; background: #4a4d52; border-top: 6px solid #6e7173; margin-right: 4px; display: flex; align-items: center; justify-content: center; flex: none; padding-bottom: 6px; }
.task.active { background: #31657f; border-top-color: #3ba2db; }
.obs { width: 64px; height: 64px; border-radius: 14px; background: #1e1e1e; margin: 0 22px 0 18px; display: flex; align-items: center; justify-content: center; }
.tray { margin-left: 736px; display: flex; gap: 28px; align-items: center; }
.tray svg { width: 32px; height: 32px; }
.tray svg.wide { width: 42px; margin: 0 -5px; }
.tray svg.up { margin-left: -3px; }
.clock { width: 150px; margin-left: 16px; text-align: center; font-size: 32px; line-height: 32px; white-space: nowrap; }
.clock small { display: block; font-size: 26px; line-height: 24px; }
.desk { margin-left: 26px; }
```
